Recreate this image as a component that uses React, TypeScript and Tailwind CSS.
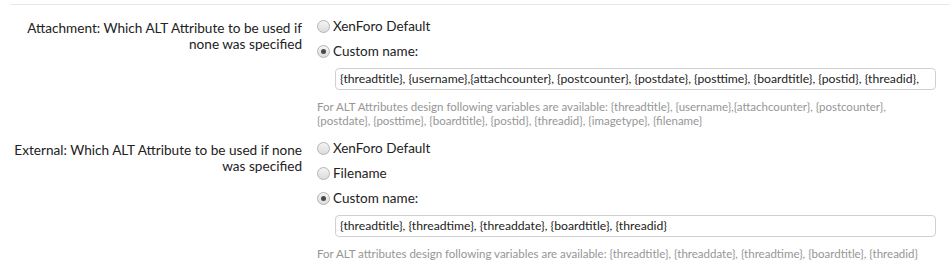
import React from 'react';

const font = { fontFamily: 'Lato, "Liberation Sans", sans-serif' };

function Radio({ checked, label }: { checked?: boolean; label: string }) {
  return (
    <div className="flex h-[25px] items-center">
      <span className="flex h-[13px] w-[13px] items-center justify-center rounded-full border border-[#b4b4b4] bg-gradient-to-b from-[#f4f4f4] to-[#dcdcdc]">
        {checked && <span className="h-[5px] w-[5px] rounded-full bg-[#4a4a4a]" />}
      </span>
      <span className="ml-[3px] text-[13.5px] text-[#222]">{label}</span>
    </div>
  );
}

function Field({ value }: { value: string }) {
  return (
    <div className="ml-[18px] mt-[4px] flex h-[22px] w-[601px] items-center overflow-hidden whitespace-nowrap rounded-[4px] border border-[#d0d0d0] bg-white pl-[4px] text-[12.2px] text-[#222]">
      {value}
    </div>
  );
}

function Row({
  lines,
  options,
  value,
  explain,
  top,
}: {
  lines: string[];
  options: { label: string; checked?: boolean }[];
  value: string;
  explain: string[];
  top: string;
}) {
  return (
    <div className={`flex ${top}`}>
      <div className="mt-[6px] w-[292px] shrink-0 text-right text-[13.6px] leading-[16px] text-[#222]">
        {lines.map(l => (
          <div key={l} className="whitespace-nowrap">{l}</div>
        ))}
      </div>
      <div className="ml-[15px] flex-1">
        {options.map(o => (
          <Radio key={o.label} label={o.label} checked={o.checked} />
        ))}
        <Field value={value} />
        <div className="mt-[10px] text-[11.5px] leading-[14px] text-[#969696]">
          {explain.map(l => (
            <div key={l} className="whitespace-nowrap">{l}</div>
          ))}
        </div>
      </div>
    </div>
  );
}

export default function App() {
  return (
    <div className="h-[275px] w-[950px] bg-white pl-[10px]" style={font}>
      <div className="pt-[4px]">
        <div className="border-t border-[#e4e9ef]" />
        <Row
          top="pt-[9px]"
          lines={['Attachment: Which ALT Attribute to be used if', 'none was specified']}
          options={[{ label: 'XenForo Default' }, { label: 'Custom name:', checked: true }]}
          value="{threadtitle}, {username},{attachcounter}, {postcounter}, {postdate}, {posttime}, {boardtitle}, {postid}, {threadid},"
          explain={[
            'For ALT Attributes design following variables are available: {threadtitle}, {username},{attachcounter}, {postcounter},',
            '{postdate}, {posttime}, {boardtitle}, {postid}, {threadid}, {imagetype}, {filename}',
          ]}
        />
        <Row
          top="pt-[8px]"
          lines={['External: Which ALT Attribute to be used if none', 'was specified']}
          options={[
            { label: 'XenForo Default' },
            { label: 'Filename' },
            { label: 'Custom name:', checked: true },
          ]}
          value="{threadtitle}, {threadtime}, {threaddate}, {boardtitle}, {threadid}"
          explain={[
            'For ALT attributes design following variables are available: {threadtitle}, {threaddate}, {threadtime}, {boardtitle}, {threadid}',
          ]}
        />
      </div>
    </div>
  );
}
